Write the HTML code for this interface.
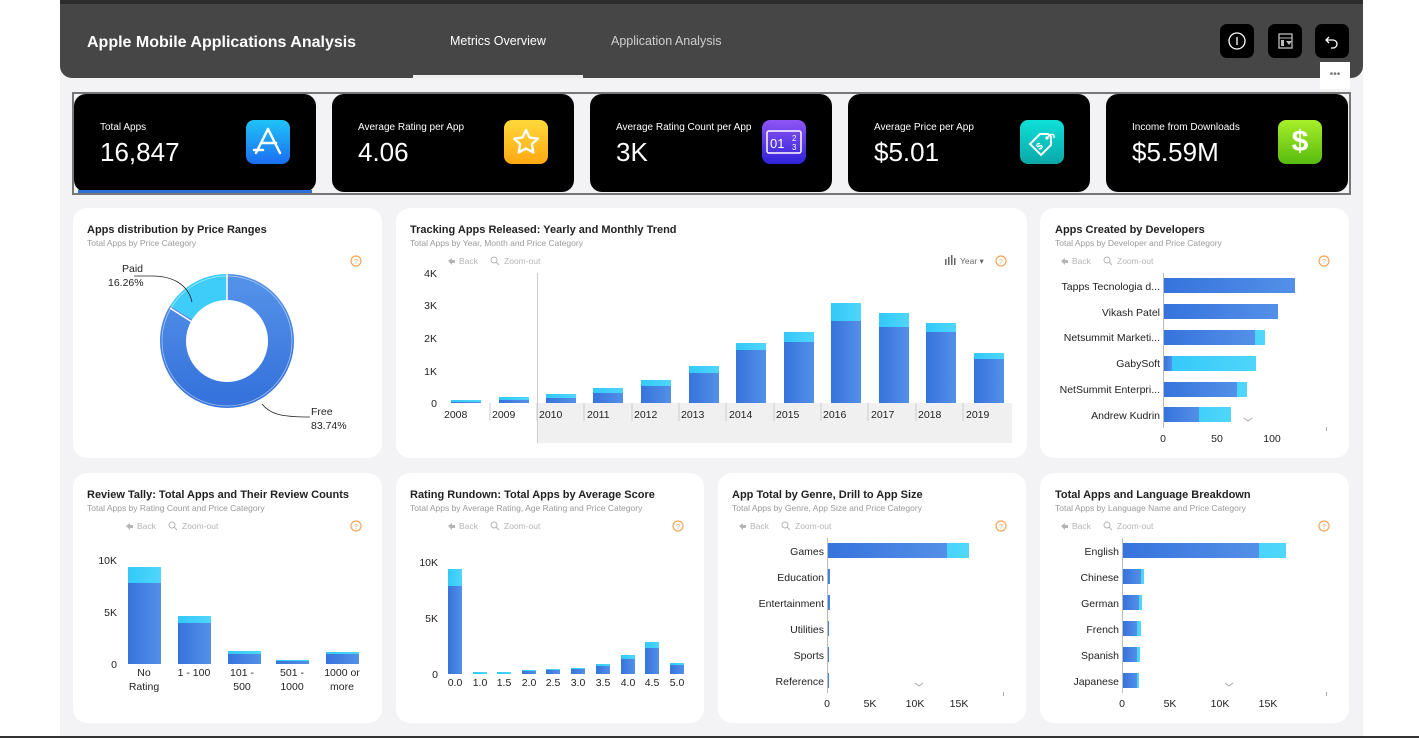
<!DOCTYPE html>
<html><head><meta charset="utf-8"><style>
*{margin:0;padding:0;box-sizing:border-box}
body{width:1419px;height:738px;overflow:hidden;background:#fff;font-family:"Liberation Sans",sans-serif;position:relative}
.a{position:absolute}
.canvas{left:60px;top:0;width:1303px;height:738px;background:#f3f3f5}
.hdr{left:60px;top:4px;width:1303px;height:74px;background:#464646;border-radius:0 0 12px 12px}
.btn{top:24px;width:34px;height:34px;background:#000;border-radius:7px}
.card{top:94px;width:242px;height:98px;background:#000;border-radius:12px;color:#fff}
.card .l{position:absolute;left:26px;top:28px;font-size:10px}
.card .v{position:absolute;left:26px;top:43px;font-size:26px}
.card .ic{position:absolute;left:172px;top:26px;width:44px;height:44px;border-radius:8px}
.p{background:#fff;border-radius:14px}
.t{font-size:11px;font-weight:bold;color:#222}
.s{font-size:8.5px;color:#9a9a9a}
svg text{font-family:"Liberation Sans",sans-serif}
</style></head><body>
<div class="a canvas"></div>
<div class="a" style="left:60px;top:0;width:1303px;height:4px;background:#2d2d2d"></div>
<div class="a" style="left:0;top:736px;width:1419px;height:2px;background:#333"></div>
<div class="a hdr"></div>
<div class="a" style="left:87px;top:34px;color:#fff;font-size:16px;font-weight:bold">Apple Mobile Applications Analysis</div>
<div class="a" style="left:450px;top:34px;color:#fff;font-size:12.5px">Metrics Overview</div>
<div class="a" style="left:611px;top:34px;color:#cfcfcf;font-size:12.5px">Application Analysis</div>
<div class="a" style="left:413px;top:75px;width:170px;height:3px;background:#eee"></div>
<div class="a btn" style="left:1220px"><svg width="34" height="34"><circle cx="17" cy="17" r="8" fill="none" stroke="#fff" stroke-width="1.3"/><line x1="17" y1="13" x2="17" y2="21" stroke="#fff" stroke-width="1.3"/></svg></div>
<div class="a btn" style="left:1268px"><svg width="34" height="34"><rect x="11" y="10" width="13" height="14" fill="none" stroke="#bbb" stroke-width="1.3"/><line x1="11" y1="14" x2="24" y2="14" stroke="#bbb"/><rect x="13" y="16" width="3" height="6" fill="#bbb"/><path d="M18 17h6l-3 4z" fill="#bbb"/></svg></div>
<div class="a btn" style="left:1315px"><svg width="34" height="34"><path d="M14 13l-3 3 3 3M11 16h7a4 4 0 0 1 0 8h-2" fill="none" stroke="#fff" stroke-width="1.3"/></svg></div>
<div class="a" style="left:1320px;top:62px;width:30px;height:27px;background:#fff;color:#777;font-size:10px;text-align:center;line-height:25px">•••</div>

<div class="a" style="left:72px;top:92px;width:1279px;height:103px;border:2px solid #777"></div>

<div class="a card" style="left:74px"><div class="l">Total Apps</div><div class="v">16,847</div>
<div class="ic" style="background:linear-gradient(#1fc3f8,#1b6ef0)"><svg width="44" height="44"><path d="M22 9l-12 24M22 9l12 24M16 23h14M8 30h9" stroke="#fff" stroke-width="2.5" stroke-linecap="round" fill="none"/></svg></div>
<div class="a" style="left:4px;top:96px;width:234px;height:3px;background:#2f6fd8"></div></div>
<div class="a card" style="left:332px"><div class="l">Average Rating per App</div><div class="v">4.06</div>
<div class="ic" style="background:linear-gradient(#ffd93a,#ffa812)"><svg width="44" height="44"><path d="M22 10l3.6 7.6 8.2 1-6 5.7 1.5 8.1-7.3-4-7.3 4 1.5-8.1-6-5.7 8.2-1z" fill="none" stroke="#fff" stroke-width="2.4" stroke-linejoin="round"/></svg></div></div>
<div class="a card" style="left:590px"><div class="l">Average Rating Count per App</div><div class="v">3K</div>
<div class="ic" style="background:linear-gradient(#8f55f5,#2f22d8)"><svg width="44" height="44"><rect x="5" y="11" width="34" height="22" rx="2" fill="none" stroke="#fff" stroke-width="1.5"/><text x="8" y="28" fill="#fff" font-size="13">01</text><text x="30" y="21" fill="#fff" font-size="8">2</text><text x="30" y="30" fill="#fff" font-size="8">3</text></svg></div></div>
<div class="a card" style="left:848px"><div class="l">Average Price per App</div><div class="v">$5.01</div>
<div class="ic" style="background:linear-gradient(#0ee0d8,#0aa8a8)"><svg width="44" height="44"><path d="M20 14l8 0 3 3 0 8-10 10-11-11z" fill="none" stroke="#fff" stroke-width="2"/><circle cx="27" cy="18" r="1.6" fill="#fff"/><text x="16" y="29" fill="#fff" font-size="10" font-weight="bold" transform="rotate(-40 20 25)">$</text><path d="M28 17c3-4 7-3 6 1" stroke="#fff" fill="none" stroke-width="1.5"/></svg></div></div>
<div class="a card" style="left:1106px"><div class="l">Income from Downloads</div><div class="v">$5.59M</div>
<div class="ic" style="background:linear-gradient(#a8ee2a,#58bb0e);color:#fff;font-size:30px;font-weight:bold;text-align:center;line-height:44px">$</div></div>

<div class="a p" style="left:73px;top:208px;width:309px;height:250px"></div>
<div class="a p" style="left:396px;top:208px;width:631px;height:250px"></div>
<div class="a p" style="left:1040px;top:208px;width:309px;height:250px"></div>
<div class="a p" style="left:73px;top:473px;width:309px;height:250px"></div>
<div class="a p" style="left:396px;top:473px;width:308px;height:250px"></div>
<div class="a p" style="left:718px;top:473px;width:308px;height:250px"></div>
<div class="a p" style="left:1040px;top:473px;width:309px;height:250px"></div>

<div class="a t" style="left:87px;top:224px">Apps distribution by Price Ranges</div>
<div class="a s" style="left:87px;top:238px">Total Apps by Price Category</div>
<div class="a t" style="left:410px;top:224px">Tracking Apps Released: Yearly and Monthly Trend</div>
<div class="a s" style="left:410px;top:238px">Total Apps by Year, Month and Price Category</div>
<div class="a t" style="left:1055px;top:224px">Apps Created by Developers</div>
<div class="a s" style="left:1055px;top:238px">Total Apps by Developer and Price Category</div>
<div class="a t" style="left:87px;top:489px">Review Tally: Total Apps and Their Review Counts</div>
<div class="a s" style="left:87px;top:503px">Total Apps by Rating Count and Price Category</div>
<div class="a t" style="left:410px;top:489px">Rating Rundown: Total Apps by Average Score</div>
<div class="a s" style="left:410px;top:503px">Total Apps by Average Rating, Age Rating and Price Category</div>
<div class="a t" style="left:732px;top:489px">App Total by Genre, Drill to App Size</div>
<div class="a s" style="left:732px;top:503px">Total Apps by Genre, App Size and Price Category</div>
<div class="a t" style="left:1055px;top:489px">Total Apps and Language Breakdown</div>
<div class="a s" style="left:1055px;top:503px">Total Apps by Language Name and Price Category</div>

<svg class="a" style="left:0;top:0" width="1419" height="738" font-size="10.5">
<defs><linearGradient id="g" x1="0" x2="1"><stop offset="0" stop-color="#3673dc"/><stop offset="1" stop-color="#5390e8"/></linearGradient>
<linearGradient id="h" x1="0" x2="1"><stop offset="0" stop-color="#33c8f8"/><stop offset="1" stop-color="#4fd6fb"/></linearGradient>
<g id="help"><circle r="5" fill="none" stroke="#f5a55a" stroke-width="1.2"/><text y="3" text-anchor="middle" font-size="7" fill="#f5a55a">?</text></g>
<g id="bz" font-size="8.5" fill="#b5b5b5"><path d="M0 0l4-3v2h3v3h-3v2z" fill="#b5b5b5"/><text x="11" y="3">Back</text><circle cx="46" cy="-1" r="3" fill="none" stroke="#b5b5b5"/><line x1="48" y1="1" x2="51" y2="4" stroke="#b5b5b5"/><text x="56" y="3">Zoom-out</text></g></defs>
<use href="#help" x="356" y="261"/><use href="#help" x="1001" y="261"/><use href="#help" x="1324" y="261"/><use href="#help" x="356" y="526"/><use href="#help" x="678" y="526"/><use href="#help" x="1001" y="526"/><use href="#help" x="1324" y="526"/>
<use href="#bz" x="448" y="261"/><use href="#bz" x="1061" y="261"/><use href="#bz" x="126" y="526"/><use href="#bz" x="448" y="526"/><use href="#bz" x="739" y="526"/><use href="#bz" x="1061" y="526"/>
<text x="960" y="264" font-size="8.5" fill="#666">Year ▾</text><g fill="#666"><rect x="945" y="259" width="1.5" height="6"/><rect x="948" y="257" width="1.5" height="8"/><rect x="951" y="255" width="1.5" height="10"/><rect x="954" y="258" width="1.5" height="7"/></g>

<g transform="rotate(-90 227 341)">
<circle cx="227" cy="341" r="54" fill="none" stroke="url(#g)" stroke-width="26" stroke-dasharray="284.1 400"/>
<circle cx="227" cy="341" r="54" fill="none" stroke="#3dcdf8" stroke-width="26" stroke-dasharray="0 284.1 55.2 10"/>
</g>
<circle cx="227" cy="341" r="65" fill="none" stroke="#fff" stroke-width="0.7" opacity=".6"/>
<line x1="227" y1="274" x2="227" y2="300" stroke="#fff" stroke-width="1.5"/>
<line x1="170" y1="308" x2="192" y2="322" stroke="#fff" stroke-width="1.5"/>
<path d="M134 276h18c20 0 36 8 40 26" fill="none" stroke="#222" stroke-width=".8"/>
<path d="M262 404c8 10 18 13 48 13" fill="none" stroke="#222" stroke-width=".8"/>
<text x="122" y="272" fill="#222">Paid</text><text x="108" y="286" fill="#222">16.26%</text>
<text x="311" y="415" fill="#222">Free</text><text x="311" y="429" fill="#222">83.74%</text>

<g fill="#222" text-anchor="end"><text x="437" y="277">4K</text><text x="437" y="309">3K</text><text x="437" y="342">2K</text><text x="437" y="375">1K</text><text x="437" y="407">0</text></g>
<rect x="537" y="403" width="475" height="40" fill="#f0f0f0"/>
<line x1="537.5" y1="273" x2="537.5" y2="443" stroke="#ccc"/>
<g fill="url(#h)"><rect x="451" y="400" width="30" height="3"/><rect x="499" y="397" width="30" height="6"/><rect x="546" y="394" width="30" height="9"/><rect x="593" y="388" width="30" height="15"/><rect x="641" y="380" width="30" height="23"/><rect x="689" y="366" width="30" height="37"/><rect x="736" y="343" width="30" height="60"/><rect x="784" y="332" width="30" height="71"/><rect x="831" y="303" width="30" height="100"/><rect x="879" y="313" width="30" height="90"/><rect x="926" y="323" width="30" height="80"/><rect x="974" y="353" width="30" height="50"/></g>
<g fill="url(#g)"><rect x="451" y="402" width="30" height="1"/><rect x="499" y="400" width="30" height="3"/><rect x="546" y="398" width="30" height="5"/><rect x="593" y="393" width="30" height="10"/><rect x="641" y="386" width="30" height="17"/><rect x="689" y="373" width="30" height="30"/><rect x="736" y="350" width="30" height="53"/><rect x="784" y="342" width="30" height="61"/><rect x="831" y="321" width="30" height="82"/><rect x="879" y="327" width="30" height="76"/><rect x="926" y="332" width="30" height="71"/><rect x="974" y="359" width="30" height="44"/></g>
<g stroke="#ccc"><line x1="490" y1="403" x2="490" y2="421"/><line x1="537" y1="403" x2="537" y2="421"/><line x1="584" y1="403" x2="584" y2="421"/><line x1="632" y1="403" x2="632" y2="421"/><line x1="679" y1="403" x2="679" y2="421"/><line x1="726" y1="403" x2="726" y2="421"/><line x1="774" y1="403" x2="774" y2="421"/><line x1="821" y1="403" x2="821" y2="421"/><line x1="868" y1="403" x2="868" y2="421"/><line x1="916" y1="403" x2="916" y2="421"/><line x1="963" y1="403" x2="963" y2="421"/></g>
<g fill="#222"><text x="444" y="418">2008</text><text x="492" y="418">2009</text><text x="539" y="418">2010</text><text x="587" y="418">2011</text><text x="634" y="418">2012</text><text x="681" y="418">2013</text><text x="729" y="418">2014</text><text x="776" y="418">2015</text><text x="823" y="418">2016</text><text x="871" y="418">2017</text><text x="918" y="418">2018</text><text x="966" y="418">2019</text></g>

<line x1="1163.5" y1="273" x2="1163.5" y2="428" stroke="#bbb"/>
<g fill="url(#h)"><rect x="1164" y="330" width="101" height="15"/><rect x="1164" y="356" width="92" height="15"/><rect x="1164" y="382" width="83" height="15"/><rect x="1164" y="407" width="67" height="15"/></g>
<g fill="url(#g)"><rect x="1164" y="278" width="131" height="15"/><rect x="1164" y="304" width="114" height="15"/><rect x="1164" y="330" width="91" height="15"/><rect x="1164" y="356" width="8" height="15"/><rect x="1164" y="382" width="73" height="15"/><rect x="1164" y="407" width="35" height="15"/></g>
<g fill="#222" text-anchor="end"><text x="1160" y="290">Tapps Tecnologia d...</text><text x="1160" y="316">Vikash Patel</text><text x="1160" y="341">Netsummit Marketi...</text><text x="1160" y="367">GabySoft</text><text x="1160" y="393">NetSummit Enterpri...</text><text x="1160" y="419">Andrew Kudrin</text></g>
<g fill="#222" text-anchor="middle"><text x="1163" y="442">0</text><text x="1217" y="442">50</text><text x="1272" y="442">100</text></g>
<line x1="1326.5" y1="427" x2="1326.5" y2="431" stroke="#aaa"/>
<path d="M1244 418l4 3 4-3" fill="none" stroke="#aaa"/>

<g fill="#222" text-anchor="end"><text x="117" y="564">10K</text><text x="117" y="616">5K</text><text x="117" y="668">0</text></g>
<g fill="url(#h)"><rect x="128" y="567" width="33" height="97"/><rect x="178" y="616" width="33" height="48"/><rect x="228" y="651" width="33" height="13"/><rect x="276" y="660" width="33" height="4"/><rect x="326" y="652" width="33" height="12"/></g>
<g fill="url(#g)"><rect x="128" y="583" width="33" height="81"/><rect x="178" y="623" width="33" height="41"/><rect x="228" y="654" width="33" height="10"/><rect x="276" y="661" width="33" height="3"/><rect x="326" y="654" width="33" height="10"/></g>
<g fill="#222" text-anchor="middle"><text x="144" y="676">No</text><text x="144" y="690">Rating</text><text x="194" y="676">1 - 100</text><text x="242" y="676">101 -</text><text x="242" y="690">500</text><text x="292" y="676">501 -</text><text x="292" y="690">1000</text><text x="342" y="676">1000 or</text><text x="342" y="690">more</text></g>

<g fill="#222" text-anchor="end"><text x="438" y="566">10K</text><text x="438" y="622">5K</text><text x="438" y="678">0</text></g>
<g fill="url(#h)"><rect x="448" y="569" width="14" height="105"/><rect x="473" y="672" width="14" height="2"/><rect x="497" y="672" width="14" height="2"/><rect x="522" y="670" width="14" height="4"/><rect x="546" y="669" width="14" height="5"/><rect x="571" y="668" width="14" height="6"/><rect x="596" y="664" width="14" height="10"/><rect x="621" y="655" width="14" height="19"/><rect x="645" y="642" width="14" height="32"/><rect x="670" y="663" width="14" height="11"/></g>
<g fill="url(#g)"><rect x="448" y="586" width="14" height="88"/><rect x="522" y="671" width="14" height="3"/><rect x="546" y="670" width="14" height="4"/><rect x="571" y="669" width="14" height="5"/><rect x="596" y="666" width="14" height="8"/><rect x="621" y="659" width="14" height="15"/><rect x="645" y="648" width="14" height="26"/><rect x="670" y="665" width="14" height="9"/></g>
<g fill="#222" text-anchor="middle"><text x="455" y="686">0.0</text><text x="480" y="686">1.0</text><text x="504" y="686">1.5</text><text x="529" y="686">2.0</text><text x="553" y="686">2.5</text><text x="578" y="686">3.0</text><text x="603" y="686">3.5</text><text x="628" y="686">4.0</text><text x="652" y="686">4.5</text><text x="677" y="686">5.0</text></g>

<line x1="827.5" y1="538" x2="827.5" y2="693" stroke="#bbb"/>
<g fill="url(#h)"><rect x="828" y="543" width="141" height="15"/></g>
<g fill="url(#g)"><rect x="828" y="543" width="119" height="15"/><rect x="828" y="569" width="2" height="15"/><rect x="828" y="595" width="2" height="15"/><rect x="828" y="621" width="1" height="15"/><rect x="828" y="647" width="1" height="15"/><rect x="828" y="673" width="1" height="15"/></g>
<g fill="#222" text-anchor="end"><text x="824" y="555">Games</text><text x="824" y="581">Education</text><text x="824" y="607">Entertainment</text><text x="824" y="633">Utilities</text><text x="824" y="659">Sports</text><text x="824" y="685">Reference</text></g>
<g fill="#222" text-anchor="middle"><text x="827" y="707">0</text><text x="870" y="707">5K</text><text x="915" y="707">10K</text><text x="959" y="707">15K</text></g>
<line x1="1003.5" y1="692" x2="1003.5" y2="696" stroke="#aaa"/>
<path d="M915 683l4 3 4-3" fill="none" stroke="#aaa"/>

<line x1="1122.5" y1="538" x2="1122.5" y2="693" stroke="#bbb"/>
<g fill="url(#h)"><rect x="1123" y="543" width="163" height="15"/><rect x="1123" y="569" width="21" height="15"/><rect x="1123" y="595" width="19" height="15"/><rect x="1123" y="621" width="18" height="15"/><rect x="1123" y="647" width="17" height="15"/><rect x="1123" y="673" width="16" height="15"/></g>
<g fill="url(#g)"><rect x="1123" y="543" width="136" height="15"/><rect x="1123" y="569" width="18" height="15"/><rect x="1123" y="595" width="16" height="15"/><rect x="1123" y="621" width="14" height="15"/><rect x="1123" y="647" width="14" height="15"/><rect x="1123" y="673" width="14" height="15"/></g>
<g fill="#222" text-anchor="end"><text x="1119" y="555">English</text><text x="1119" y="581">Chinese</text><text x="1119" y="607">German</text><text x="1119" y="633">French</text><text x="1119" y="659">Spanish</text><text x="1119" y="685">Japanese</text></g>
<g fill="#222" text-anchor="middle"><text x="1122" y="707">0</text><text x="1170" y="707">5K</text><text x="1220" y="707">10K</text><text x="1268" y="707">15K</text></g>
<line x1="1326.5" y1="692" x2="1326.5" y2="696" stroke="#aaa"/>
<path d="M1225 683l4 3 4-3" fill="none" stroke="#aaa"/>
</svg>
</body></html>
